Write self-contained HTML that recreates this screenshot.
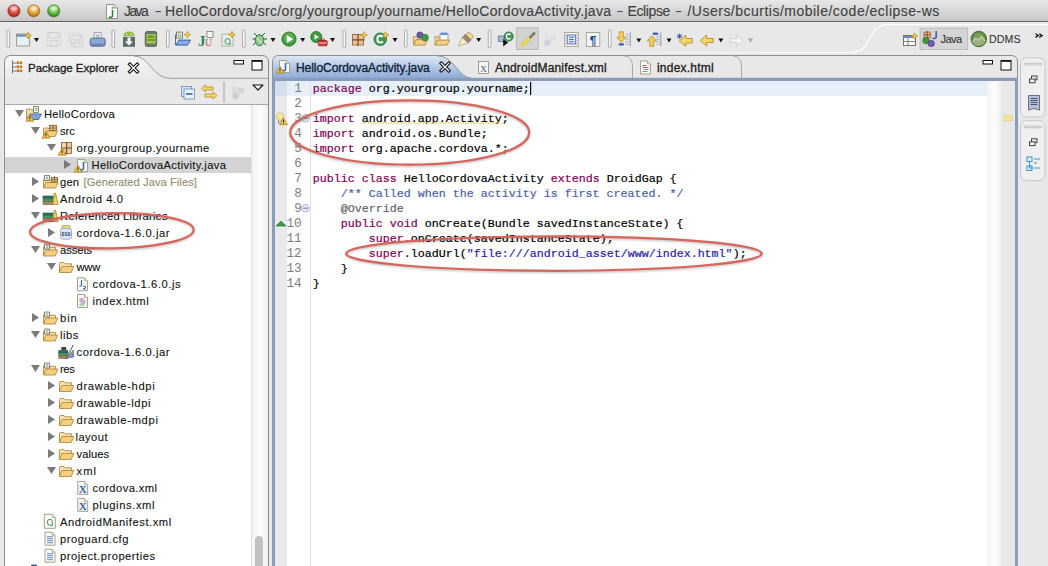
<!DOCTYPE html>
<html><head><meta charset="utf-8"><title>Eclipse</title>
<style>html,body{margin:0;padding:0;background:#e8e8e8;overflow:hidden}svg{display:block}</style>
</head><body><svg width="1048" height="566" viewBox="0 0 1048 566"><defs><linearGradient id="gTitle" x1="0" y1="0" x2="0" y2="1"><stop offset="0" stop-color="#e8e8e8"/><stop offset="1" stop-color="#c6c6c6"/></linearGradient><linearGradient id="gActTab" x1="0" y1="0" x2="0" y2="1"><stop offset="0" stop-color="#dde7f4"/><stop offset="1" stop-color="#8dabd8"/></linearGradient><linearGradient id="gViewTab" x1="0" y1="0" x2="0" y2="1"><stop offset="0" stop-color="#f6f6f6"/><stop offset="1" stop-color="#e9e9e9"/></linearGradient><radialGradient id="gRed" cx="0.5" cy="0.35" r="0.6"><stop offset="0" stop-color="#f7a8a0"/><stop offset="0.6" stop-color="#e0483e"/><stop offset="1" stop-color="#a8231c"/></radialGradient><radialGradient id="gYel" cx="0.5" cy="0.35" r="0.6"><stop offset="0" stop-color="#fbe3a6"/><stop offset="0.6" stop-color="#e5a53a"/><stop offset="1" stop-color="#a86d12"/></radialGradient><radialGradient id="gGrn" cx="0.5" cy="0.35" r="0.6"><stop offset="0" stop-color="#c8eeb0"/><stop offset="0.6" stop-color="#6bbf45"/><stop offset="1" stop-color="#2f7d1a"/></radialGradient><linearGradient id="gScroll" x1="0" y1="0" x2="1" y2="0"><stop offset="0" stop-color="#f2f2f2"/><stop offset="0.5" stop-color="#fdfdfd"/><stop offset="1" stop-color="#f0f0f0"/></linearGradient><pattern id="pHatch" width="2" height="2" patternUnits="userSpaceOnUse"><rect width="2" height="2" fill="#dfe8f4"/><rect width="1" height="1" fill="#c9d6e8"/><rect x="1" y="1" width="1" height="1" fill="#c9d6e8"/></pattern><linearGradient id="gWhiteLine" gradientUnits="userSpaceOnUse" x1="560" y1="0" x2="820" y2="0"><stop offset="0" stop-color="#fff" stop-opacity="0"/><stop offset="1" stop-color="#fff" stop-opacity="1"/></linearGradient><filter id="fShadow" x="-10%" y="-30%" width="120%" height="160%"><feGaussianBlur stdDeviation="1.2"/></filter></defs><rect x="0" y="0" width="1048" height="566" fill="#e8e8e8"/><rect x="0" y="0" width="1048" height="21" fill="url(#gTitle)"/><rect x="0" y="21" width="1048" height="1" fill="#5e5e5e"/><rect x="0" y="22" width="1048" height="1" fill="#efefef"/><circle cx="13.9" cy="10.9" r="6.1" fill="url(#gRed)" stroke="#8c2a22" stroke-opacity="0.75" stroke-width="0.8"/><ellipse cx="13.9" cy="8.2" rx="3.6" ry="2.3" fill="#fff" opacity="0.45"/><circle cx="33.7" cy="10.9" r="6.1" fill="url(#gYel)" stroke="#9a6a1a" stroke-opacity="0.75" stroke-width="0.8"/><ellipse cx="33.7" cy="8.2" rx="3.6" ry="2.3" fill="#fff" opacity="0.45"/><circle cx="53.7" cy="10.9" r="6.1" fill="url(#gGrn)" stroke="#3a7a2a" stroke-opacity="0.75" stroke-width="0.8"/><ellipse cx="53.7" cy="8.2" rx="3.6" ry="2.3" fill="#fff" opacity="0.45"/><path d="M106.5 4.5 H114 L117.5 8 V18.5 H106.5 Z" fill="#fafaf6" stroke="#8a8a80" stroke-width="0.9" stroke-linejoin="round"/><path d="M114 4.5 V8 H117.5" fill="#e0e0d8" stroke="#8a8a80" stroke-width="0.7"/><path d="M112.5 10 V15.8 Q112.5 17.5 110.8 17.5 Q109.6 17.5 109.2 16.6" fill="none" stroke="#2a7a2a" stroke-width="1.5"/><rect x="111.8" y="7.2" width="1.4" height="1.4" fill="#2a7a2a"/><text x="124.0" y="16" font-size="14" fill="#404040" stroke="#404040" stroke-width="0.12" font-family='"Liberation Sans",sans-serif' xml:space="preserve"  textLength="24.8" lengthAdjust="spacing">Java</text><text x="165.0" y="16" font-size="14" fill="#404040" stroke="#404040" stroke-width="0.12" font-family='"Liberation Sans",sans-serif' xml:space="preserve"  textLength="446.0" lengthAdjust="spacing">HelloCordova/src/org/yourgroup/yourname/HelloCordovaActivity.java</text><text x="627.5" y="16" font-size="14" fill="#404040" stroke="#404040" stroke-width="0.12" font-family='"Liberation Sans",sans-serif' xml:space="preserve"  textLength="42.8" lengthAdjust="spacing">Eclipse</text><text x="687.5" y="16" font-size="14" fill="#404040" stroke="#404040" stroke-width="0.12" font-family='"Liberation Sans",sans-serif' xml:space="preserve"  textLength="251.8" lengthAdjust="spacing">/Users/bcurtis/mobile/code/eclipse-ws</text><rect x="155.6" y="11" width="5.400000000000006" height="1.1" fill="#505050"/><rect x="617.3" y="11" width="5.300000000000068" height="1.1" fill="#505050"/><rect x="676" y="11" width="5.399999999999977" height="1.1" fill="#505050"/><path d="M560 52.5 H850 C862 52.5 866 46 870 38 C875 29 878 24.6 888 24.6 H1048" fill="none" stroke="url(#gWhiteLine)" stroke-width="1.2"/><path d="M4.5 566 V62 Q4.5 55.5 11 55.5 H262 Q268.5 55.5 268.5 62 V566" fill="#e8e8e8" stroke="#8e8e8e" stroke-width="1"/><path d="M5 78.5 V63 Q5 56 12 56 H133 C150 56 152 78 170 78 H268 V79 H5 Z" fill="url(#gViewTab)"/><path d="M133 55.8 C150 55.8 152 78.3 170 78.3 H268" fill="none" stroke="#9c9c9c" stroke-width="1"/><rect x="5" y="104" width="263" height="1" fill="#a8a8a8"/><rect x="5" y="105" width="263" height="461" fill="#ffffff"/><rect x="251" y="105" width="17" height="461" fill="url(#gScroll)"/><rect x="251" y="105" width="1" height="461" fill="#e2e2e2"/><rect x="255" y="536" width="8" height="40" rx="4" fill="#c2c2c2"/><text x="28.0" y="72" font-size="11.6" fill="#1a1a1a" stroke="#1a1a1a" stroke-width="0.3" font-family='"Liberation Sans",sans-serif' xml:space="preserve"  textLength="90.6" lengthAdjust="spacing">Package Explorer</text><path d="M272.5 566 V62 Q272.5 55.5 279 55.5 H1011 Q1017.5 55.5 1017.5 62 V566" fill="#e8e8e8" stroke="#8e8e8e" stroke-width="1"/><path d="M273 78 V63 Q273 56 280 56 H437 C455 56 458 78 472 78 Z" fill="url(#gActTab)"/><path d="M437 55.8 C455 55.8 458 78.3 472 78.3 H1017" fill="none" stroke="#9c9c9c" stroke-width="1"/><path d="M624 56 C630 56 632 60 632.5 66 V78" fill="none" stroke="#a8a8a8" stroke-width="1"/><path d="M733 56 C739 56 741 60 741.5 66 V78" fill="none" stroke="#a8a8a8" stroke-width="1"/><rect x="272" y="78" width="746" height="3" fill="#8a9cba"/><rect x="272" y="78" width="3" height="488" fill="#8a9cba"/><rect x="1015" y="78" width="3" height="488" fill="#8a9cba"/><rect x="275" y="81" width="1" height="485" fill="#dde7f5"/><rect x="987" y="81" width="28" height="1" fill="#dde7f5"/><rect x="275" y="81" width="12" height="485" fill="#e9e9e9"/><rect x="275" y="81" width="12" height="15" fill="url(#pHatch)"/><rect x="287" y="81" width="23" height="485" fill="#ffffff"/><rect x="310" y="81" width="1" height="485" fill="#e3e3e3"/><rect x="311" y="81" width="676" height="485" fill="#ffffff"/><rect x="287" y="81" width="700" height="15" fill="#e6effa"/><rect x="310" y="81" width="1" height="15" fill="#d6dfea"/><rect x="987" y="81" width="14" height="485" fill="url(#gScroll)"/><rect x="1001" y="81" width="14" height="485" fill="#e8e8e8"/><rect x="1004" y="115.7" width="8.5" height="5" fill="#f3e39a" stroke="#e5cf6e" stroke-width="0.6"/><text x="296.0" y="71.6" font-size="12" fill="#0d1a33" stroke="#0d1a33" stroke-width="0.3" font-family='"Liberation Sans",sans-serif' xml:space="preserve"  textLength="133.8" lengthAdjust="spacing">HelloCordovaActivity.java</text><text x="495" y="71.6" font-size="12" fill="#1a1a1a" stroke="#1a1a1a" stroke-width="0.3" font-family='"Liberation Sans",sans-serif' xml:space="preserve"  textLength="111.6" lengthAdjust="spacing">AndroidManifest.xml</text><text x="657.0" y="71.6" font-size="12" fill="#1a1a1a" stroke="#1a1a1a" stroke-width="0.3" font-family='"Liberation Sans",sans-serif' xml:space="preserve"  textLength="56.6" lengthAdjust="spacing">index.html</text><rect x="1020.6" y="57.8" width="24.4" height="59.2" rx="6" fill="#efefef" stroke="#c4c4c4" stroke-width="0.9"/><rect x="1020.6" y="120.6" width="24.4" height="60.0" rx="6" fill="#efefef" stroke="#c4c4c4" stroke-width="0.9"/><text x="301.7" y="92.1" font-size="12.6" fill="#7c7c7c" text-anchor="end" font-family='"Liberation Mono",monospace'>1</text><text x="312.80" y="91.8" font-size="11.67" fill="#7f0055" stroke="#7f0055" stroke-width="0.2" font-family='"Liberation Mono",monospace' xml:space="preserve">package</text><text x="361.80" y="91.8" font-size="11.67" fill="#000000" stroke="#000000" stroke-width="0.2" font-family='"Liberation Mono",monospace' xml:space="preserve"> org.yourgroup.yourname;</text><text x="301.7" y="107.1" font-size="12.6" fill="#7c7c7c" text-anchor="end" font-family='"Liberation Mono",monospace'>2</text><text x="301.7" y="122.1" font-size="12.6" fill="#7c7c7c" text-anchor="end" font-family='"Liberation Mono",monospace'>3</text><text x="312.80" y="121.8" font-size="11.67" fill="#7f0055" stroke="#7f0055" stroke-width="0.2" font-family='"Liberation Mono",monospace' xml:space="preserve">import</text><text x="354.80" y="121.8" font-size="11.67" fill="#000000" stroke="#000000" stroke-width="0.2" font-family='"Liberation Mono",monospace' xml:space="preserve"> android.app.Activity;</text><text x="301.7" y="137.10000000000002" font-size="12.6" fill="#7c7c7c" text-anchor="end" font-family='"Liberation Mono",monospace'>4</text><text x="312.80" y="136.8" font-size="11.67" fill="#7f0055" stroke="#7f0055" stroke-width="0.2" font-family='"Liberation Mono",monospace' xml:space="preserve">import</text><text x="354.80" y="136.8" font-size="11.67" fill="#000000" stroke="#000000" stroke-width="0.2" font-family='"Liberation Mono",monospace' xml:space="preserve"> android.os.Bundle;</text><text x="301.7" y="152.10000000000002" font-size="12.6" fill="#7c7c7c" text-anchor="end" font-family='"Liberation Mono",monospace'>5</text><text x="312.80" y="151.8" font-size="11.67" fill="#7f0055" stroke="#7f0055" stroke-width="0.2" font-family='"Liberation Mono",monospace' xml:space="preserve">import</text><text x="354.80" y="151.8" font-size="11.67" fill="#000000" stroke="#000000" stroke-width="0.2" font-family='"Liberation Mono",monospace' xml:space="preserve"> org.apache.cordova.*;</text><text x="301.7" y="167.10000000000002" font-size="12.6" fill="#7c7c7c" text-anchor="end" font-family='"Liberation Mono",monospace'>6</text><text x="301.7" y="182.10000000000002" font-size="12.6" fill="#7c7c7c" text-anchor="end" font-family='"Liberation Mono",monospace'>7</text><text x="312.80" y="181.8" font-size="11.67" fill="#7f0055" stroke="#7f0055" stroke-width="0.2" font-family='"Liberation Mono",monospace' xml:space="preserve">public</text><text x="361.80" y="181.8" font-size="11.67" fill="#7f0055" stroke="#7f0055" stroke-width="0.2" font-family='"Liberation Mono",monospace' xml:space="preserve">class</text><text x="396.80" y="181.8" font-size="11.67" fill="#000000" stroke="#000000" stroke-width="0.2" font-family='"Liberation Mono",monospace' xml:space="preserve"> HelloCordovaActivity </text><text x="550.80" y="181.8" font-size="11.67" fill="#7f0055" stroke="#7f0055" stroke-width="0.2" font-family='"Liberation Mono",monospace' xml:space="preserve">extends</text><text x="599.80" y="181.8" font-size="11.67" fill="#000000" stroke="#000000" stroke-width="0.2" font-family='"Liberation Mono",monospace' xml:space="preserve"> DroidGap {</text><text x="301.7" y="197.10000000000002" font-size="12.6" fill="#7c7c7c" text-anchor="end" font-family='"Liberation Mono",monospace'>8</text><text x="340.80" y="196.8" font-size="11.67" fill="#4a5fa8" stroke="#4a5fa8" stroke-width="0.2" font-family='"Liberation Mono",monospace' xml:space="preserve">/** Called when the activity is first created. */</text><text x="301.7" y="212.10000000000002" font-size="12.6" fill="#7c7c7c" text-anchor="end" font-family='"Liberation Mono",monospace'>9</text><text x="340.80" y="211.8" font-size="11.67" fill="#646464" stroke="#646464" stroke-width="0.2" font-family='"Liberation Mono",monospace' xml:space="preserve">@Override</text><text x="301.7" y="227.10000000000002" font-size="12.6" fill="#7c7c7c" text-anchor="end" font-family='"Liberation Mono",monospace'>10</text><text x="340.80" y="226.8" font-size="11.67" fill="#7f0055" stroke="#7f0055" stroke-width="0.2" font-family='"Liberation Mono",monospace' xml:space="preserve">public</text><text x="389.80" y="226.8" font-size="11.67" fill="#7f0055" stroke="#7f0055" stroke-width="0.2" font-family='"Liberation Mono",monospace' xml:space="preserve">void</text><text x="417.80" y="226.8" font-size="11.67" fill="#000000" stroke="#000000" stroke-width="0.2" font-family='"Liberation Mono",monospace' xml:space="preserve"> onCreate(Bundle savedInstanceState) {</text><text x="301.7" y="242.10000000000002" font-size="12.6" fill="#7c7c7c" text-anchor="end" font-family='"Liberation Mono",monospace'>11</text><text x="368.80" y="241.8" font-size="11.67" fill="#7f0055" stroke="#7f0055" stroke-width="0.2" font-family='"Liberation Mono",monospace' xml:space="preserve">super</text><text x="403.80" y="241.8" font-size="11.67" fill="#000000" stroke="#000000" stroke-width="0.2" font-family='"Liberation Mono",monospace' xml:space="preserve">.onCreate(savedInstanceState);</text><text x="301.7" y="257.1" font-size="12.6" fill="#7c7c7c" text-anchor="end" font-family='"Liberation Mono",monospace'>12</text><text x="368.80" y="256.8" font-size="11.67" fill="#7f0055" stroke="#7f0055" stroke-width="0.2" font-family='"Liberation Mono",monospace' xml:space="preserve">super</text><text x="403.80" y="256.8" font-size="11.67" fill="#000000" stroke="#000000" stroke-width="0.2" font-family='"Liberation Mono",monospace' xml:space="preserve">.loadUrl(</text><text x="466.80" y="256.8" font-size="11.67" fill="#2a1aa6" stroke="#2a1aa6" stroke-width="0.2" font-family='"Liberation Mono",monospace' xml:space="preserve">"file:///android_asset/www/index.html"</text><text x="732.80" y="256.8" font-size="11.67" fill="#000000" stroke="#000000" stroke-width="0.2" font-family='"Liberation Mono",monospace' xml:space="preserve">);</text><text x="301.7" y="272.1" font-size="12.6" fill="#7c7c7c" text-anchor="end" font-family='"Liberation Mono",monospace'>13</text><text x="312.80" y="271.8" font-size="11.67" fill="#000000" stroke="#000000" stroke-width="0.2" font-family='"Liberation Mono",monospace' xml:space="preserve">    }</text><text x="301.7" y="287.1" font-size="12.6" fill="#7c7c7c" text-anchor="end" font-family='"Liberation Mono",monospace'>14</text><text x="312.80" y="286.8" font-size="11.67" fill="#000000" stroke="#000000" stroke-width="0.2" font-family='"Liberation Mono",monospace' xml:space="preserve">}</text><rect x="530" y="82" width="1.2" height="13" fill="#000"/><rect x="5" y="157" width="246" height="16" fill="#d4d4d4"/><path d="M15 110.0 H24 L19.5 117.0 Z" fill="#7b7b7b"/><g transform="translate(26 106)"><path d="M0.5 13 V4 Q0.5 3 1.5 3 H5 L6 4.2 H10 V7" fill="#f5dca0" stroke="#b08a44" stroke-width="0.9"/><path d="M1 13.5 L4 8 H15.5 L12.5 13.5 Z" fill="#7fa6dc" stroke="#3c64a8" stroke-width="0.9" stroke-linejoin="round"/><path d="M7.5 0.5 H12.5 V6.5 H7.5 Z" fill="#f6f6f2" stroke="#6a6a5a" stroke-width="0.8"/><path d="M9 2.5 H11.3 M9 4.3 H11.3" stroke="#5a8a4a" stroke-width="0.7"/></g><g transform="translate(26 114)"><path d="M4 0.3 L8 7.2 H0 Z" fill="#f2c84b" stroke="#a57a1c" stroke-width="0.7" stroke-linejoin="round"/><rect x="3.55" y="2.2" width="0.9" height="2.8" fill="#222"/><rect x="3.55" y="5.6" width="0.9" height="0.9" fill="#222"/></g><text x="44.0" y="118" font-size="11.2" fill="#111" stroke="#111" stroke-width="0.1" font-family='"Liberation Sans",sans-serif' xml:space="preserve"  textLength="70.8" lengthAdjust="spacing">HelloCordova</text><path d="M31 127.0 H40 L35.5 134.0 Z" fill="#7b7b7b"/><g transform="translate(42 124)"><path d="M1.5 12.5 V5 Q1.5 4 2.5 4 H6 L7 5.2 H12 V7" fill="#f5dca0" stroke="#b08a44" stroke-width="0.9"/><path d="M1.5 12.5 L4 7 H15.5 L13 12.5 Z" fill="#f3cf7e" stroke="#b08a44" stroke-width="0.9" stroke-linejoin="round"/><rect x="7.5" y="1.5" width="7" height="5" fill="#e6c08a" stroke="#8a5a2a" stroke-width="0.8"/><path d="M11 0.5 V7 M7 4 H15" stroke="#8a5a2a" stroke-width="0.8"/></g><g transform="translate(42 131)"><path d="M4 0.3 L8 7.2 H0 Z" fill="#f2c84b" stroke="#a57a1c" stroke-width="0.7" stroke-linejoin="round"/><rect x="3.55" y="2.2" width="0.9" height="2.8" fill="#222"/><rect x="3.55" y="5.6" width="0.9" height="0.9" fill="#222"/></g><text x="60.0" y="135" font-size="11.2" fill="#111" stroke="#111" stroke-width="0.1" font-family='"Liberation Sans",sans-serif' xml:space="preserve"  textLength="14.8" lengthAdjust="spacing">src</text><path d="M47 144.0 H56 L51.5 151.0 Z" fill="#7b7b7b"/><g transform="translate(58 142)"><rect x="3.5" y="0.5" width="10" height="11" fill="#e9c9a5" stroke="#9a6a3a" stroke-width="0.9"/><path d="M8.5 0 V12.5 M3 6 H14" stroke="#7a4a20" stroke-width="1.2"/><rect x="4.3" y="1.3" width="3.5" height="4" fill="#f1dcc0"/></g><g transform="translate(58 148)"><path d="M4 0.3 L8 7.2 H0 Z" fill="#f2c84b" stroke="#a57a1c" stroke-width="0.7" stroke-linejoin="round"/><rect x="3.55" y="2.2" width="0.9" height="2.8" fill="#222"/><rect x="3.55" y="5.6" width="0.9" height="0.9" fill="#222"/></g><text x="76.5" y="152" font-size="11.2" fill="#111" stroke="#111" stroke-width="0.1" font-family='"Liberation Sans",sans-serif' xml:space="preserve"  textLength="132.8" lengthAdjust="spacing">org.yourgroup.yourname</text><path d="M64 160.0 V169.0 L71 164.5 Z" fill="#7b7b7b"/><g transform="translate(77 159)"><path d="M0.5 0.5 H7.5 L10.5 3.5 V12.5 H0.5 Z" fill="#fbfbf6" stroke="#9d9680" stroke-width="0.9" stroke-linejoin="round"/><path d="M7.5 0.5 V3.5 H10.5" fill="#e8e4d0" stroke="#9d9680" stroke-width="0.7"/><path d="M6.5 3 V9 Q6.5 10.8 4.6 10.8 Q3.2 10.8 2.8 9.8" fill="none" stroke="#3a6fb8" stroke-width="1.6"/></g><g transform="translate(74 165)"><path d="M4 0.3 L8 7.2 H0 Z" fill="#f2c84b" stroke="#a57a1c" stroke-width="0.7" stroke-linejoin="round"/><rect x="3.55" y="2.2" width="0.9" height="2.8" fill="#222"/><rect x="3.55" y="5.6" width="0.9" height="0.9" fill="#222"/></g><text x="91.5" y="169" font-size="11.2" fill="#111" stroke="#111" stroke-width="0.1" font-family='"Liberation Sans",sans-serif' xml:space="preserve"  textLength="134.4" lengthAdjust="spacing">HelloCordovaActivity.java</text><path d="M32 177.0 V186.0 L39 181.5 Z" fill="#7b7b7b"/><g transform="translate(43 175)"><path d="M0.5 13 V5 Q0.5 4 1.5 4 H5 L6 5.2 H11 V7" fill="#f5dca0" stroke="#b08a44" stroke-width="0.9"/><path d="M0.5 13 L3 7.5 H15 L12.5 13 Z" fill="#f3cf7e" stroke="#b08a44" stroke-width="0.9" stroke-linejoin="round"/><path d="M1.5 0.5 H6.5 V5.5 H1.5 Z" fill="#f4f4f4" stroke="#6a6a5a" stroke-width="0.8"/><path d="M3 2.3 H5.2 M3 3.8 H5.2" stroke="#5a8a4a" stroke-width="0.7"/><rect x="8.5" y="2.5" width="6" height="4.5" fill="#e6c08a" stroke="#8a5a2a" stroke-width="0.8"/><path d="M11.5 1 V7.5 M8 4.7 H15" stroke="#8a5a2a" stroke-width="0.8"/></g><text x="60.0" y="186" font-size="11.2" fill="#111" stroke="#111" stroke-width="0.1" font-family='"Liberation Sans",sans-serif' xml:space="preserve"  textLength="19.0" lengthAdjust="spacing">gen</text><text x="83.5" y="186" font-size="11.2" fill="#938b6c" stroke="#938b6c" stroke-width="0.1" font-family='"Liberation Sans",sans-serif' xml:space="preserve"  textLength="113.4" lengthAdjust="spacing">[Generated Java Files]</text><path d="M32 194.0 V203.0 L39 198.5 Z" fill="#7b7b7b"/><g transform="translate(42.5 192.5)"><rect x="0.5" y="3.5" width="10" height="2.6" fill="#2f6f6a" stroke="#1d4a47" stroke-width="0.6"/><rect x="0.5" y="6.3" width="10" height="2.6" fill="#4f9a63" stroke="#2e6a3e" stroke-width="0.6"/><rect x="0.5" y="9.2" width="10" height="2.8" fill="#a98a62" stroke="#6f5636" stroke-width="0.6"/><path d="M10.5 12 L11.5 1 L13 0.5 L15.5 12 Z" fill="#f0cf5a" stroke="#9f7f2a" stroke-width="0.7" stroke-linejoin="round"/><path d="M12 4 L14 4.5" stroke="#9f7f2a" stroke-width="0.6"/></g><text x="60" y="203" font-size="11.2" fill="#111" stroke="#111" stroke-width="0.1" font-family='"Liberation Sans",sans-serif' xml:space="preserve"  textLength="63.0" lengthAdjust="spacing">Android 4.0</text><path d="M31 212.0 H40 L35.5 219.0 Z" fill="#7b7b7b"/><g transform="translate(42.5 209.5)"><rect x="0.5" y="3.5" width="10" height="2.6" fill="#2f6f6a" stroke="#1d4a47" stroke-width="0.6"/><rect x="0.5" y="6.3" width="10" height="2.6" fill="#4f9a63" stroke="#2e6a3e" stroke-width="0.6"/><rect x="0.5" y="9.2" width="10" height="2.8" fill="#a98a62" stroke="#6f5636" stroke-width="0.6"/><path d="M10.5 12 L11.5 1 L13 0.5 L15.5 12 Z" fill="#f0cf5a" stroke="#9f7f2a" stroke-width="0.7" stroke-linejoin="round"/><path d="M12 4 L14 4.5" stroke="#9f7f2a" stroke-width="0.6"/></g><text x="60.0" y="220" font-size="11.2" fill="#111" stroke="#111" stroke-width="0.1" font-family='"Liberation Sans",sans-serif' xml:space="preserve"  textLength="107.6" lengthAdjust="spacing">Referenced Libraries</text><path d="M48 228.0 V237.0 L55 232.5 Z" fill="#7b7b7b"/><g transform="translate(60 225)"><rect x="2" y="0.5" width="8" height="3" rx="0.8" fill="#f3dc86" stroke="#b59a3a" stroke-width="0.8"/><rect x="0.5" y="3.2" width="11" height="11" rx="2.5" fill="#dce6f2" stroke="#8f9fb8" stroke-width="0.8"/><text x="6" y="11.2" font-size="6.2" text-anchor="middle" font-family="'Liberation Sans',sans-serif" font-weight="bold" fill="#1f3470" textLength="9" lengthAdjust="spacingAndGlyphs">010</text></g><text x="76.5" y="237" font-size="11.2" fill="#111" stroke="#111" stroke-width="0.1" font-family='"Liberation Sans",sans-serif' xml:space="preserve"  textLength="93.0" lengthAdjust="spacing">cordova-1.6.0.jar</text><path d="M31 246.0 H40 L35.5 253.0 Z" fill="#7b7b7b"/><g transform="translate(43 245.5)"><path d="M0.5 10.5 V1.5 Q0.5 0.5 1.5 0.5 H5 L6 1.8 H12.5 V4.5" fill="#f7e2ad" stroke="#b38a42" stroke-width="0.9"/><path d="M0.5 10.5 L3 4.5 H14.8 L12.2 10.5 Z" fill="#f3cf7e" stroke="#b38a42" stroke-width="0.9" stroke-linejoin="round"/></g><g transform="translate(43 243.5)"><path d="M1.5 0.5 H6.5 V5.5 H1.5 Z" fill="#f4f4f4" stroke="#6a6a5a" stroke-width="0.8"/><path d="M3 2.3 H5.2 M3 3.8 H5.2" stroke="#5a8a4a" stroke-width="0.7"/></g><text x="60.0" y="254" font-size="11.2" fill="#111" stroke="#111" stroke-width="0.1" font-family='"Liberation Sans",sans-serif' xml:space="preserve"  textLength="32.2" lengthAdjust="spacing">assets</text><path d="M47 263.0 H56 L51.5 270.0 Z" fill="#7b7b7b"/><g transform="translate(59 262)"><path d="M0.5 10.5 V1.5 Q0.5 0.5 1.5 0.5 H5 L6 1.8 H12.5 V4.5" fill="#f7e2ad" stroke="#b38a42" stroke-width="0.9"/><path d="M0.5 10.5 L3 4.5 H14.8 L12.2 10.5 Z" fill="#f3cf7e" stroke="#b38a42" stroke-width="0.9" stroke-linejoin="round"/></g><text x="76.5" y="271" font-size="11.2" fill="#111" stroke="#111" stroke-width="0.1" font-family='"Liberation Sans",sans-serif' xml:space="preserve"  textLength="23.8" lengthAdjust="spacing">www</text><g transform="translate(77 277.3)"><path d="M0.5 0.5 H7.5 L10.5 3.5 V13.5 H0.5 Z" fill="#fbfbf6" stroke="#9d9680" stroke-width="0.9" stroke-linejoin="round"/><path d="M7.5 0.5 V3.5 H10.5" fill="#e8e4d0" stroke="#9d9680" stroke-width="0.7"/><path d="M4.5 2.8 V7.5 Q4.5 9 3 9 H2.3 M6 9 Q9 9 8.5 10.3 Q8 11.5 6 11.5 Q8.5 11.8 8.5 12.3" fill="none" stroke="#2b5ea8" stroke-width="1.1"/></g><text x="92.5" y="288" font-size="11.2" fill="#111" stroke="#111" stroke-width="0.1" font-family='"Liberation Sans",sans-serif' xml:space="preserve"  textLength="88.2" lengthAdjust="spacing">cordova-1.6.0.js</text><g transform="translate(77 294)"><path d="M0.5 0.5 H7.5 L10.5 3.5 V13.5 H0.5 Z" fill="#fbfbf6" stroke="#9d9680" stroke-width="0.9" stroke-linejoin="round"/><path d="M7.5 0.5 V3.5 H10.5" fill="#e8e4d0" stroke="#9d9680" stroke-width="0.7"/><path d="M2.5 5 H6.5" stroke="#7a5aa8" stroke-width="1"/><path d="M2.5 7 H8.5" stroke="#c85a5a" stroke-width="1"/><path d="M3.5 9 H8.5" stroke="#5a8ac8" stroke-width="1"/><path d="M2.5 11 H7.5" stroke="#5aa87a" stroke-width="1"/></g><text x="92.5" y="305" font-size="11.2" fill="#111" stroke="#111" stroke-width="0.1" font-family='"Liberation Sans",sans-serif' xml:space="preserve"  textLength="56.2" lengthAdjust="spacing">index.html</text><path d="M32 313.0 V322.0 L39 317.5 Z" fill="#7b7b7b"/><g transform="translate(43 313.5)"><path d="M0.5 10.5 V1.5 Q0.5 0.5 1.5 0.5 H5 L6 1.8 H12.5 V4.5" fill="#f7e2ad" stroke="#b38a42" stroke-width="0.9"/><path d="M0.5 10.5 L3 4.5 H14.8 L12.2 10.5 Z" fill="#f3cf7e" stroke="#b38a42" stroke-width="0.9" stroke-linejoin="round"/></g><g transform="translate(43 311.5)"><path d="M1.5 0.5 H6.5 V5.5 H1.5 Z" fill="#f4f4f4" stroke="#6a6a5a" stroke-width="0.8"/><path d="M3 2.3 H5.2 M3 3.8 H5.2" stroke="#5a8a4a" stroke-width="0.7"/></g><text x="60.0" y="322" font-size="11.2" fill="#111" stroke="#111" stroke-width="0.1" font-family='"Liberation Sans",sans-serif' xml:space="preserve"  textLength="16.8" lengthAdjust="spacing">bin</text><path d="M31 331.0 H40 L35.5 338.0 Z" fill="#7b7b7b"/><g transform="translate(43 330.5)"><path d="M0.5 10.5 V1.5 Q0.5 0.5 1.5 0.5 H5 L6 1.8 H12.5 V4.5" fill="#f7e2ad" stroke="#b38a42" stroke-width="0.9"/><path d="M0.5 10.5 L3 4.5 H14.8 L12.2 10.5 Z" fill="#f3cf7e" stroke="#b38a42" stroke-width="0.9" stroke-linejoin="round"/></g><g transform="translate(43 328.5)"><path d="M1.5 0.5 H6.5 V5.5 H1.5 Z" fill="#f4f4f4" stroke="#6a6a5a" stroke-width="0.8"/><path d="M3 2.3 H5.2 M3 3.8 H5.2" stroke="#5a8a4a" stroke-width="0.7"/></g><text x="60.0" y="339" font-size="11.2" fill="#111" stroke="#111" stroke-width="0.1" font-family='"Liberation Sans",sans-serif' xml:space="preserve"  textLength="18.4" lengthAdjust="spacing">libs</text><g transform="translate(58.3 344)"><rect x="0.5" y="6.5" width="9" height="2.5" fill="#2f6f6a" stroke="#1d4a47" stroke-width="0.6"/><rect x="0.5" y="9.2" width="9" height="2.5" fill="#4f9a63" stroke="#2e6a3e" stroke-width="0.6"/><rect x="0.5" y="12" width="9" height="2.5" fill="#a98a62" stroke="#6f5636" stroke-width="0.6"/><path d="M3 3 H8 V6.5 H3 Z" fill="#444" /><path d="M8 14 L15 1" stroke="#555" stroke-width="1"/><path d="M7 14.5 L15 6 L15.5 13 Z" fill="#8a8fb0" stroke="#5a5f80" stroke-width="0.6"/></g><text x="76.5" y="356" font-size="11.2" fill="#111" stroke="#111" stroke-width="0.1" font-family='"Liberation Sans",sans-serif' xml:space="preserve"  textLength="93.0" lengthAdjust="spacing">cordova-1.6.0.jar</text><path d="M31 365.0 H40 L35.5 372.0 Z" fill="#7b7b7b"/><g transform="translate(43 364.5)"><path d="M0.5 10.5 V1.5 Q0.5 0.5 1.5 0.5 H5 L6 1.8 H12.5 V4.5" fill="#f7e2ad" stroke="#b38a42" stroke-width="0.9"/><path d="M0.5 10.5 L3 4.5 H14.8 L12.2 10.5 Z" fill="#f3cf7e" stroke="#b38a42" stroke-width="0.9" stroke-linejoin="round"/></g><g transform="translate(43 362.5)"><path d="M1.5 0.5 H6.5 V5.5 H1.5 Z" fill="#f4f4f4" stroke="#6a6a5a" stroke-width="0.8"/><path d="M3 2.3 H5.2 M3 3.8 H5.2" stroke="#5a8a4a" stroke-width="0.7"/></g><text x="60.0" y="373" font-size="11.2" fill="#111" stroke="#111" stroke-width="0.1" font-family='"Liberation Sans",sans-serif' xml:space="preserve"  textLength="14.8" lengthAdjust="spacing">res</text><path d="M48 381.0 V390.0 L55 385.5 Z" fill="#7b7b7b"/><g transform="translate(59 381)"><path d="M0.5 10.5 V1.5 Q0.5 0.5 1.5 0.5 H5 L6 1.8 H12.5 V4.5" fill="#f7e2ad" stroke="#b38a42" stroke-width="0.9"/><path d="M0.5 10.5 L3 4.5 H14.8 L12.2 10.5 Z" fill="#f3cf7e" stroke="#b38a42" stroke-width="0.9" stroke-linejoin="round"/></g><text x="76.5" y="390" font-size="11.2" fill="#111" stroke="#111" stroke-width="0.1" font-family='"Liberation Sans",sans-serif' xml:space="preserve"  textLength="78.2" lengthAdjust="spacing">drawable-hdpi</text><path d="M48 398.0 V407.0 L55 402.5 Z" fill="#7b7b7b"/><g transform="translate(59 398)"><path d="M0.5 10.5 V1.5 Q0.5 0.5 1.5 0.5 H5 L6 1.8 H12.5 V4.5" fill="#f7e2ad" stroke="#b38a42" stroke-width="0.9"/><path d="M0.5 10.5 L3 4.5 H14.8 L12.2 10.5 Z" fill="#f3cf7e" stroke="#b38a42" stroke-width="0.9" stroke-linejoin="round"/></g><text x="76.5" y="407" font-size="11.2" fill="#111" stroke="#111" stroke-width="0.1" font-family='"Liberation Sans",sans-serif' xml:space="preserve"  textLength="74.0" lengthAdjust="spacing">drawable-ldpi</text><path d="M48 415.0 V424.0 L55 419.5 Z" fill="#7b7b7b"/><g transform="translate(59 415)"><path d="M0.5 10.5 V1.5 Q0.5 0.5 1.5 0.5 H5 L6 1.8 H12.5 V4.5" fill="#f7e2ad" stroke="#b38a42" stroke-width="0.9"/><path d="M0.5 10.5 L3 4.5 H14.8 L12.2 10.5 Z" fill="#f3cf7e" stroke="#b38a42" stroke-width="0.9" stroke-linejoin="round"/></g><text x="76.5" y="424" font-size="11.2" fill="#111" stroke="#111" stroke-width="0.1" font-family='"Liberation Sans",sans-serif' xml:space="preserve"  textLength="81.4" lengthAdjust="spacing">drawable-mdpi</text><path d="M48 432.0 V441.0 L55 436.5 Z" fill="#7b7b7b"/><g transform="translate(59 432)"><path d="M0.5 10.5 V1.5 Q0.5 0.5 1.5 0.5 H5 L6 1.8 H12.5 V4.5" fill="#f7e2ad" stroke="#b38a42" stroke-width="0.9"/><path d="M0.5 10.5 L3 4.5 H14.8 L12.2 10.5 Z" fill="#f3cf7e" stroke="#b38a42" stroke-width="0.9" stroke-linejoin="round"/></g><text x="75.5" y="441" font-size="11.2" fill="#111" stroke="#111" stroke-width="0.1" font-family='"Liberation Sans",sans-serif' xml:space="preserve"  textLength="32.0" lengthAdjust="spacing">layout</text><path d="M48 449.0 V458.0 L55 453.5 Z" fill="#7b7b7b"/><g transform="translate(59 449)"><path d="M0.5 10.5 V1.5 Q0.5 0.5 1.5 0.5 H5 L6 1.8 H12.5 V4.5" fill="#f7e2ad" stroke="#b38a42" stroke-width="0.9"/><path d="M0.5 10.5 L3 4.5 H14.8 L12.2 10.5 Z" fill="#f3cf7e" stroke="#b38a42" stroke-width="0.9" stroke-linejoin="round"/></g><text x="76.5" y="458" font-size="11.2" fill="#111" stroke="#111" stroke-width="0.1" font-family='"Liberation Sans",sans-serif' xml:space="preserve"  textLength="32.6" lengthAdjust="spacing">values</text><path d="M47 467.0 H56 L51.5 474.0 Z" fill="#7b7b7b"/><g transform="translate(59 466)"><path d="M0.5 10.5 V1.5 Q0.5 0.5 1.5 0.5 H5 L6 1.8 H12.5 V4.5" fill="#f7e2ad" stroke="#b38a42" stroke-width="0.9"/><path d="M0.5 10.5 L3 4.5 H14.8 L12.2 10.5 Z" fill="#f3cf7e" stroke="#b38a42" stroke-width="0.9" stroke-linejoin="round"/></g><text x="76.5" y="475" font-size="11.2" fill="#111" stroke="#111" stroke-width="0.1" font-family='"Liberation Sans",sans-serif' xml:space="preserve"  textLength="19.6" lengthAdjust="spacing">xml</text><g transform="translate(77.2 481)"><path d="M0.5 0.5 H7.5 L10.5 3.5 V13.5 H0.5 Z" fill="#fbfbf6" stroke="#9d9680" stroke-width="0.9" stroke-linejoin="round"/><path d="M7.5 0.5 V3.5 H10.5" fill="#e8e4d0" stroke="#9d9680" stroke-width="0.7"/><rect x="1.2" y="3.8" width="8.6" height="9.4" fill="#e2eaf4"/><text x="5.5" y="12.2" font-size="10.5" text-anchor="middle" font-family="'Liberation Serif',serif" fill="#22447a">X</text></g><text x="92.5" y="492" font-size="11.2" fill="#111" stroke="#111" stroke-width="0.1" font-family='"Liberation Sans",sans-serif' xml:space="preserve"  textLength="64.6" lengthAdjust="spacing">cordova.xml</text><g transform="translate(77.2 498)"><path d="M0.5 0.5 H7.5 L10.5 3.5 V13.5 H0.5 Z" fill="#fbfbf6" stroke="#9d9680" stroke-width="0.9" stroke-linejoin="round"/><path d="M7.5 0.5 V3.5 H10.5" fill="#e8e4d0" stroke="#9d9680" stroke-width="0.7"/><rect x="1.2" y="3.8" width="8.6" height="9.4" fill="#e2eaf4"/><text x="5.5" y="12.2" font-size="10.5" text-anchor="middle" font-family="'Liberation Serif',serif" fill="#22447a">X</text></g><text x="92.5" y="509" font-size="11.2" fill="#111" stroke="#111" stroke-width="0.1" font-family='"Liberation Sans",sans-serif' xml:space="preserve"  textLength="62.0" lengthAdjust="spacing">plugins.xml</text><g transform="translate(43.8 513.8)"><path d="M0.5 0.5 H8.5 L11.5 3.5 V14.5 H0.5 Z" fill="#fbfbf6" stroke="#9d9680" stroke-width="0.9" stroke-linejoin="round"/><path d="M8.5 0.5 V3.5 H11.5" fill="#e8e4d0" stroke="#9d9680" stroke-width="0.7"/><path d="M8.5 12 V7.5 Q8.5 5.5 6.2 5.5 Q3.5 5.5 3.5 8.5 Q3.5 11.5 6 11.5 H9" fill="none" stroke="#3f9a5a" stroke-width="1"/></g><text x="60" y="526" font-size="11.2" fill="#111" stroke="#111" stroke-width="0.1" font-family='"Liberation Sans",sans-serif' xml:space="preserve"  textLength="111.2" lengthAdjust="spacing">AndroidManifest.xml</text><g transform="translate(44.5 531.7)"><path d="M0.5 0.5 H7.5 L10.5 3.5 V13.5 H0.5 Z" fill="#fbfbf6" stroke="#9d9680" stroke-width="0.9" stroke-linejoin="round"/><path d="M7.5 0.5 V3.5 H10.5" fill="#e8e4d0" stroke="#9d9680" stroke-width="0.7"/><path d="M2.5 5 H8.5 M2.5 7 H8.5 M2.5 9 H8.5 M2.5 11 H8.5" stroke="#5a7ab8" stroke-width="0.9"/></g><text x="60.0" y="543" font-size="11.2" fill="#111" stroke="#111" stroke-width="0.1" font-family='"Liberation Sans",sans-serif' xml:space="preserve"  textLength="68.4" lengthAdjust="spacing">proguard.cfg</text><g transform="translate(44.5 548.7)"><path d="M0.5 0.5 H7.5 L10.5 3.5 V13.5 H0.5 Z" fill="#fbfbf6" stroke="#9d9680" stroke-width="0.9" stroke-linejoin="round"/><path d="M7.5 0.5 V3.5 H10.5" fill="#e8e4d0" stroke="#9d9680" stroke-width="0.7"/><path d="M2.5 5 H8.5 M2.5 7 H8.5 M2.5 9 H8.5 M2.5 11 H8.5" stroke="#5a7ab8" stroke-width="0.9"/></g><text x="60.0" y="560" font-size="11.2" fill="#111" stroke="#111" stroke-width="0.1" font-family='"Liberation Sans",sans-serif' xml:space="preserve"  textLength="95.0" lengthAdjust="spacing">project.properties</text><rect x="7" y="30" width="2.6" height="17.5" rx="0.6" fill="#fbfbfb" stroke="#9c9c9c" stroke-width="0.8"/><g transform="translate(16 32.5)"><rect x="0.5" y="1.5" width="13" height="12" fill="#e4f0fa" stroke="#a8926a" stroke-width="0.9"/><rect x="0.9" y="1.9" width="12.2" height="2.2" fill="#5f88c4"/></g><g transform="translate(28 35.5)"><path d="M0 -3.3 L0.9899999999999999 -0.9899999999999999 L3.3 0 L0.9899999999999999 0.9899999999999999 L0 3.3 L-0.9899999999999999 0.9899999999999999 L-3.3 0 L-0.9899999999999999 -0.9899999999999999 Z" fill="#f7d24a" stroke="#b48a1a" stroke-width="0.7" stroke-linejoin="round"/></g><path d="M34 38 H39 L36.5 42 Z" fill="#111"/><g transform="translate(46.3 32.2)"><rect x="0.5" y="0.5" width="13.5" height="13.5" rx="1" fill="none" stroke="#d2d2d2" stroke-width="1"/><rect x="3" y="0.5" width="8.5" height="5.5" fill="none" stroke="#d2d2d2" stroke-width="1"/><rect x="3.5" y="8.5" width="7.5" height="5.5" fill="none" stroke="#d2d2d2" stroke-width="1"/></g><g transform="translate(68.2 32.2)"><rect x="0.5" y="0.5" width="11" height="11" rx="1" fill="none" stroke="#dadada" stroke-width="1"/></g><g transform="translate(70.7 34.7) scale(0.86)"><rect x="0.5" y="0.5" width="13.5" height="13.5" rx="1" fill="none" stroke="#d2d2d2" stroke-width="1"/><rect x="3" y="0.5" width="8.5" height="5.5" fill="none" stroke="#d2d2d2" stroke-width="1"/><rect x="3.5" y="8.5" width="7.5" height="5.5" fill="none" stroke="#d2d2d2" stroke-width="1"/></g><g transform="translate(89.7 32.2)"><rect x="4.5" y="0.5" width="7" height="7" fill="#fff" stroke="#8a8a9a" stroke-width="0.8"/><path d="M6 3 H10 M6 5 H10" stroke="#5a6a9a" stroke-width="0.8"/><rect x="0.5" y="6" width="15" height="8" rx="2" fill="#8ea8d4" stroke="#4a5f8f" stroke-width="0.9"/><rect x="1" y="11.5" width="14" height="2.5" fill="#6a84b8"/></g><rect x="112" y="30" width="2.6" height="17.5" rx="0.6" fill="#fbfbfb" stroke="#9c9c9c" stroke-width="0.8"/><g transform="translate(123 31)"><path d="M0.5 5 Q0.5 0.5 6 0.5 Q11.5 0.5 11.5 5 Z" fill="#92bb3e"/><circle cx="3.8" cy="3.3" r="0.7" fill="#fff"/><circle cx="8.2" cy="3.3" r="0.7" fill="#fff"/><rect x="0" y="5.8" width="12" height="10" fill="#5f6b6b"/><path d="M4.5 6.5 V10.5 H2 L6 14.5 L10 10.5 H7.5 V6.5 Z" fill="#fff"/></g><g transform="translate(144.7 31)"><rect x="0.5" y="0.5" width="11.5" height="15" rx="1.8" fill="#6a7a68" stroke="#4a5548" stroke-width="0.7"/><rect x="1.8" y="3" width="9" height="9.5" fill="#a6c655"/><path d="M2.5 7 Q2.5 4 6.3 4 Q10 4 10 7 Z" fill="#6e9a2a"/><rect x="2.5" y="8" width="7.5" height="2" fill="#6e9a2a"/></g><rect x="166.5" y="30" width="2.6" height="17.5" rx="0.6" fill="#fbfbfb" stroke="#9c9c9c" stroke-width="0.8"/><g transform="translate(175 31.6)"><path d="M0.5 13.5 V3 H5" fill="none" stroke="#3d5ea0" stroke-width="0.9"/><path d="M1 13.5 L4 8.5 H15.5 L12.5 13.5 Z" fill="#8aaee6" stroke="#2f4f9a" stroke-width="0.9" stroke-linejoin="round"/><rect x="1.5" y="0.5" width="6" height="6" fill="#f8f8f4" stroke="#6a6a5a" stroke-width="0.8"/><path d="M5.8 5 V3.2 Q5.8 2.2 4.5 2.2 Q3 2.2 3 3.8 Q3 5 4.5 5 H6" fill="none" stroke="#4a8a4a" stroke-width="0.7"/></g><g transform="translate(187.5 34.6)"><path d="M0 -3.3 L0.9899999999999999 -0.9899999999999999 L3.3 0 L0.9899999999999999 0.9899999999999999 L0 3.3 L-0.9899999999999999 0.9899999999999999 L-3.3 0 L-0.9899999999999999 -0.9899999999999999 Z" fill="#f7d24a" stroke="#b48a1a" stroke-width="0.7" stroke-linejoin="round"/></g><g transform="translate(197.5 31)"><rect x="9.5" y="0.5" width="6" height="6" fill="#f8f8f4" stroke="#6a6a5a" stroke-width="0.7"/><text x="0.5" y="15" font-size="15" font-weight="bold" font-family="'Liberation Serif',sans-serif" fill="#2a8a5a">J</text><text x="7.5" y="15" font-size="10" font-family="'Liberation Serif',sans-serif" fill="#d04a5a">U</text></g><g transform="translate(221.5 31.6)"><rect x="0.5" y="2.5" width="11" height="12" fill="#e9efe6" stroke="#a8a48a" stroke-width="0.8"/><path d="M8.5 13 V9 Q8.5 7 6 7 Q3.5 7 3.5 9.8 Q3.5 12.5 6 12.5 H9" fill="none" stroke="#2f9a6a" stroke-width="1"/></g><g transform="translate(232.0 34.6)"><path d="M0 -3.3 L0.9899999999999999 -0.9899999999999999 L3.3 0 L0.9899999999999999 0.9899999999999999 L0 3.3 L-0.9899999999999999 0.9899999999999999 L-3.3 0 L-0.9899999999999999 -0.9899999999999999 Z" fill="#f7d24a" stroke="#b48a1a" stroke-width="0.7" stroke-linejoin="round"/></g><rect x="242.5" y="30" width="2.6" height="17.5" rx="0.6" fill="#fbfbfb" stroke="#9c9c9c" stroke-width="0.8"/><g transform="translate(252 32)"><path d="M2 1 L5 4 M13 1 L10 4 M0.5 7 H4 M15 7 H11 M1 13 L4.5 10 M14 13 L10.5 10 M7.5 4 V2" stroke="#2a5a3a" stroke-width="1"/><ellipse cx="7.5" cy="8.3" rx="4.3" ry="5.5" fill="#8ec88a" stroke="#2e6a3a" stroke-width="0.9"/><path d="M5 6 L9.5 11" stroke="#c8ecc2" stroke-width="1.3"/></g><path d="M270.5 38 H275.5 L273.0 42 Z" fill="#111"/><g transform="translate(281.5 31.6)"><circle cx="7.5" cy="7.5" r="7.1" fill="#3f9a3f" stroke="#236b23" stroke-width="0.8"/><circle cx="7.5" cy="6.3" r="5.2" fill="#6fc25f" opacity="0.6"/><path d="M5.3 3.6 V11.4 L11.6 7.5 Z" fill="#fff"/></g><path d="M300.2 38 H305.2 L302.7 42 Z" fill="#111"/><g transform="translate(310.2 31.2)"><circle cx="6" cy="5.8" r="5.5" fill="#3f9a3f" stroke="#236b23" stroke-width="0.8"/><path d="M4.3 3 V8.6 L8.8 5.8 Z" fill="#fff"/><rect x="8" y="9.3" width="9" height="5.3" rx="1" fill="#d8383a" stroke="#8a1a1a" stroke-width="0.7"/><rect x="11" y="7.8" width="3" height="1.8" fill="none" stroke="#8a1a1a" stroke-width="0.7"/><rect x="8.5" y="11.3" width="8" height="1" fill="#fff" opacity="0.7"/></g><path d="M330 38 H335 L332.5 42 Z" fill="#111"/><rect x="343" y="30" width="2.6" height="17.5" rx="0.6" fill="#fbfbfb" stroke="#9c9c9c" stroke-width="0.8"/><g transform="translate(352 32)"><rect x="0.5" y="2.5" width="11" height="10.5" fill="#e6c49a" stroke="#9a6a3a" stroke-width="0.9"/><path d="M6 2 V14 M0 7.8 H12.5" stroke="#7a4a20" stroke-width="1.2"/></g><g transform="translate(364 35)"><path d="M0 -3.3 L0.9899999999999999 -0.9899999999999999 L3.3 0 L0.9899999999999999 0.9899999999999999 L0 3.3 L-0.9899999999999999 0.9899999999999999 L-3.3 0 L-0.9899999999999999 -0.9899999999999999 Z" fill="#f7d24a" stroke="#b48a1a" stroke-width="0.7" stroke-linejoin="round"/></g><g transform="translate(373.5 32)"><circle cx="6.8" cy="7.2" r="6.3" fill="#3f9a5a" stroke="#1f6a3a" stroke-width="0.8"/><path d="M9.3 5 Q8.5 3.8 7 3.8 Q3.8 3.8 3.8 7.2 Q3.8 10.6 7 10.6 Q8.5 10.6 9.3 9.4" fill="none" stroke="#fff" stroke-width="1.9"/></g><g transform="translate(385.5 35)"><path d="M0 -3.3 L0.9899999999999999 -0.9899999999999999 L3.3 0 L0.9899999999999999 0.9899999999999999 L0 3.3 L-0.9899999999999999 0.9899999999999999 L-3.3 0 L-0.9899999999999999 -0.9899999999999999 Z" fill="#f7d24a" stroke="#b48a1a" stroke-width="0.7" stroke-linejoin="round"/></g><path d="M392.5 38 H397.5 L395.0 42 Z" fill="#111"/><rect x="404.5" y="30" width="2.6" height="17.5" rx="0.6" fill="#fbfbfb" stroke="#9c9c9c" stroke-width="0.8"/><g transform="translate(413 31.6)"><path d="M0.5 13.5 V5 H6 V7" fill="#f3d896" stroke="#a88a44" stroke-width="0.8"/><path d="M0.5 13.5 L3 8 H14.5 L12 13.5 Z" fill="#f4cf80" stroke="#a88a44" stroke-width="0.9" stroke-linejoin="round"/><circle cx="7" cy="3.5" r="3.2" fill="#6a5aa8" stroke="#4a3a88" stroke-width="0.6"/><circle cx="12" cy="6" r="3.4" fill="#3f9a4a" stroke="#2a6a2a" stroke-width="0.6"/></g><g transform="translate(434.5 31.6)"><path d="M0.5 13.5 V5 H4 V7" fill="#f3d896" stroke="#a88a44" stroke-width="0.8"/><rect x="5.5" y="2.5" width="8" height="6.5" fill="#f8f8f8" stroke="#7a7a8a" stroke-width="0.7"/><rect x="6" y="1" width="7" height="2.4" fill="#6a8ac8"/><path d="M0.5 13.5 L3 8.5 H15 L12.5 13.5 Z" fill="#f4cf80" stroke="#a88a44" stroke-width="0.9" stroke-linejoin="round"/></g><g transform="translate(457.3 31.6)"><path d="M8 3 L12 0.5 L16 4.5 L13.5 8.5 Z" fill="#f0d48a" stroke="#a88a4a" stroke-width="0.7"/><path d="M5 6 L8 3 L13.5 8.5 L10.5 11.5 Z" fill="#9a8a7a" stroke="#6a5a4a" stroke-width="0.7"/><path d="M1 14.5 L5 6 L10.5 11.5 Z" fill="#f6f0d0" stroke="#a89a6a" stroke-width="0.7"/></g><path d="M476.2 38 H481.2 L478.7 42 Z" fill="#111"/><rect x="488.3" y="30" width="2.6" height="17.5" rx="0.6" fill="#fbfbfb" stroke="#9c9c9c" stroke-width="0.8"/><g transform="translate(497.7 31)"><rect x="0.5" y="5" width="6" height="5.5" fill="#a8b8d0" stroke="#5a6a8a" stroke-width="0.7"/><path d="M5.5 8 V15.5 L10.5 11.5 Z" fill="#111"/><circle cx="11" cy="5.5" r="4.6" fill="#3f9a5a" stroke="#1f6a3a" stroke-width="0.7"/><path d="M12.8 4 Q12.3 3 11 3 Q8.7 3 8.7 5.5 Q8.7 8 11 8 Q12.3 8 12.8 7" fill="none" stroke="#fff" stroke-width="1.3"/></g><rect x="516.3" y="27.8" width="21.9" height="21.8" fill="#d2d2d2" stroke="#b2b2b2" stroke-width="0.8"/><g transform="translate(519.5 31)"><path d="M9.5 6 L14.5 1 L16 2.5 L11 7.5 Z" fill="#8a8070" stroke="#6a6050" stroke-width="0.6"/><path d="M2 13.5 L9 6 L11 8 L4 15 Z" fill="#f4e24a" stroke="#c8b42a" stroke-width="0.7"/><path d="M0.5 15 L2 13 L4 14.8 Z" fill="#e8d020"/></g><g transform="translate(542.5 33)"><circle cx="4" cy="3.5" r="3.2" fill="#e4e4e4"/><circle cx="10.5" cy="4.5" r="3.2" fill="#e0e0e0"/><circle cx="5" cy="9.8" r="3.4" fill="#d4d0e2"/></g><g transform="translate(564.2 32)"><rect x="0.5" y="0.5" width="13.5" height="14" fill="#fbfbf6" stroke="#a8a088" stroke-width="0.9"/><rect x="3" y="3" width="8.5" height="9" fill="#dfe9f6" stroke="#3a5aa8" stroke-width="0.8"/><path d="M5 5.2 H9.5 M5 7.5 H9.5 M5 9.8 H9.5" stroke="#3a5aa8" stroke-width="0.9"/><path d="M1.8 2 V13 M12.7 2 V13" stroke="#6a8ac8" stroke-width="0.7" stroke-dasharray="1 1"/></g><g transform="translate(585.8 32)"><rect x="0.5" y="0.5" width="13.5" height="14" fill="#eef5fa" stroke="#a8a088" stroke-width="0.9"/><text x="7.2" y="12.5" font-size="12" font-weight="bold" text-anchor="middle" font-family="'Liberation Sans',sans-serif" fill="#2a4a7a">¶</text></g><rect x="608.5" y="30" width="2.6" height="17.5" rx="0.6" fill="#fbfbfb" stroke="#9c9c9c" stroke-width="0.8"/><g transform="translate(616.3 31.3)"><path d="M9 3 H13 M9 5.5 H13 M9 8 H13 M9 10.5 H13 M9 13 H13" stroke="#9aa8c8" stroke-width="0.8"/><path d="M14 1 V15" stroke="#6a7a9a" stroke-width="0.7"/><rect x="2.5" y="12" width="5" height="2.2" fill="#3a5aa8"/><path d="M3 0.5 H7 V6 H9.5 L5 11 L0.5 6 H3 Z" fill="#f6d05a" stroke="#b48a2a" stroke-width="0.8" stroke-linejoin="round"/></g><path d="M636.3 38.5 H641.3 L638.8 42.5 Z" fill="#111"/><g transform="translate(646.8 31.3)"><path d="M9 3 H13 M9 5.5 H13 M9 8 H13 M9 10.5 H13 M9 13 H13" stroke="#9aa8c8" stroke-width="0.8"/><path d="M14 1 V15" stroke="#6a7a9a" stroke-width="0.7"/><rect x="6" y="1.3" width="5" height="2.2" fill="#3a5aa8"/><path d="M3 15 H7 V9.5 H9.5 L5 4.5 L0.5 9.5 H3 Z" fill="#f6d05a" stroke="#b48a2a" stroke-width="0.8" stroke-linejoin="round"/></g><path d="M666.5 38.5 H671.5 L669.0 42.5 Z" fill="#111"/><g transform="translate(676.8 33.5)"><path d="M15.5 5 H9 V1.5 L2.5 7.5 L9 13 V9.5 H15.5 Z" fill="#f6d868" stroke="#b48a2a" stroke-width="0.9" stroke-linejoin="round"/><path d="M0.5 0.5 L5 5 M5 0.5 L0.5 5 M2.75 0 V5.5 M0 2.75 H5.5" stroke="#2a4a8a" stroke-width="0.8"/></g><g transform="translate(699.7 34)"><path d="M13.5 4.5 H7 V1 L0.5 6.5 L7 12 V8.5 H13.5 Z" fill="#f6d868" stroke="#b48a2a" stroke-width="0.9" stroke-linejoin="round"/></g><path d="M718.4 38.5 H723.4 L720.9 42.5 Z" fill="#111"/><g transform="translate(729.8 34)"><path d="M0.5 4.5 H7 V1 L13.5 6.5 L7 12 V8.5 H0.5 Z" fill="#f2f2f2" stroke="#d0d0d0" stroke-width="0.9" stroke-linejoin="round"/></g><path d="M748 38.5 H753 L750.5 42.5 Z" fill="#a8a8a8"/><g transform="translate(903 33)"><rect x="0.5" y="2.5" width="12" height="10" fill="#fbfbfb" stroke="#6a6a5a" stroke-width="0.9"/><rect x="1" y="3" width="11" height="2" fill="#6a8ac8"/><path d="M5 5 V12.5 M0.5 8.5 H12.5" stroke="#6a6a5a" stroke-width="0.8"/></g><g transform="translate(914.5 36)"><path d="M0 -3.2 L0.96 -0.96 L3.2 0 L0.96 0.96 L0 3.2 L-0.96 0.96 L-3.2 0 L-0.96 -0.96 Z" fill="#f7d24a" stroke="#b48a1a" stroke-width="0.7" stroke-linejoin="round"/></g><rect x="920.1" y="28.1" width="47.6" height="21.4" fill="#d5d5d5" stroke="#b4b4b4" stroke-width="0.8"/><g transform="translate(922.7 30.6)"><rect x="1.5" y="1.5" width="6" height="5.5" fill="#e6c49a" stroke="#9a5a2a" stroke-width="0.8"/><path d="M4.5 0.5 V7.5 M1 4.3 H8" stroke="#8a3a1a" stroke-width="0.9"/><path d="M13.5 0.5 V6 Q13.5 8 11.5 8 Q10.5 8 10 7.3" fill="none" stroke="#3a5ab8" stroke-width="1.5"/><circle cx="3.3" cy="10" r="3.3" fill="#3f9a3f" stroke="#236b23" stroke-width="0.6"/><circle cx="8.5" cy="12.8" r="3.2" fill="#7a5ab8" stroke="#4a2a88" stroke-width="0.6"/></g><text x="940.5" y="43" font-size="11.2" fill="#333" stroke="#333" stroke-width="0.1" font-family='"Liberation Sans",sans-serif' xml:space="preserve"  textLength="21.8" lengthAdjust="spacing">Java</text><g transform="translate(970.8 31)"><circle cx="8" cy="8" r="7.8" fill="#5f8a4a" stroke="#3a5a2a" stroke-width="0.8"/><circle cx="8" cy="8" r="6" fill="#7aa05a"/><path d="M2 11 L5 7 L7.5 9.5 L10.5 5.5 L14 9.5 V12 Q11 15 8 15 Q4 15 2 12 Z" fill="#9ab07a"/><path d="M1.5 11 L5 7 L7.5 9.5 L10.5 5.5 L14.5 10" fill="none" stroke="#eef4e0" stroke-width="0.9"/></g><text x="989.0" y="43" font-size="10.6" fill="#333" stroke="#333" stroke-width="0.1" font-family='"Liberation Sans",sans-serif' xml:space="preserve"  textLength="31.6" lengthAdjust="spacing">DDMS</text><path d="M1035.5 33.8 L1038.3 35.6 L1035.5 37.4 M1039.3 33.8 L1042.1 35.6 L1039.3 37.4" fill="none" stroke="#111" stroke-width="1.3"/><path d="M129.8 64.3 L137.2 71.7 M137.2 64.3 L129.8 71.7" stroke="#111" stroke-width="3.4" stroke-linecap="square"/><path d="M129.8 64.3 L137.2 71.7 M137.2 64.3 L129.8 71.7" stroke="#fff" stroke-width="1.3" stroke-linecap="square"/><path d="M441.3 63.3 L448.7 70.7 M448.7 63.3 L441.3 70.7" stroke="#111" stroke-width="3.4" stroke-linecap="square"/><path d="M441.3 63.3 L448.7 70.7 M448.7 63.3 L441.3 70.7" stroke="#fff" stroke-width="1.3" stroke-linecap="square"/><path d="M12.5 60.5 V73.5 M12.5 63 H16 M12.5 67 H16 M12.5 71 H16" fill="none" stroke="#666" stroke-width="0.9"/><rect x="16.5" y="61.5" width="2.6" height="2.6" fill="#c8781a"/><rect x="19.6" y="61.5" width="2.6" height="2.6" fill="#c8781a"/><rect x="16.5" y="65.5" width="2.6" height="2.6" fill="#c8781a"/><rect x="19.6" y="65.5" width="2.6" height="2.6" fill="#c8781a"/><rect x="16.5" y="69.5" width="2.6" height="2.6" fill="#c8781a"/><rect x="19.6" y="69.5" width="2.6" height="2.6" fill="#c8781a"/><rect x="234.0" y="60.5" width="9.5" height="3.5" fill="#fff" stroke="#111" stroke-width="1"/><rect x="252.0" y="60.5" width="10" height="9.5" fill="#fff" stroke="#111" stroke-width="1"/><rect x="252.0" y="60.5" width="10" height="1.3" fill="#111"/><rect x="983.0" y="60.5" width="9.5" height="3.5" fill="#fff" stroke="#111" stroke-width="1"/><rect x="1001.0" y="60.5" width="10" height="9.5" fill="#fff" stroke="#111" stroke-width="1"/><rect x="1001.0" y="60.5" width="10" height="1.3" fill="#111"/><rect x="181.5" y="86.5" width="10" height="10" fill="#d8e4f0" stroke="#6a8ab0" stroke-width="0.8"/><rect x="184" y="89" width="10.5" height="10" fill="#e8f2fa" stroke="#6a8ab0" stroke-width="0.8"/><path d="M186 94 H192.5" stroke="#2a4a7a" stroke-width="1.4"/><path d="M201.5 88.5 L205.5 85 V87 H213 V90 H205.5 V92 Z" fill="#f6d868" stroke="#b48a2a" stroke-width="0.8" stroke-linejoin="round"/><path d="M217 95.5 L213 92 V94 H205 V97 H213 V99 Z" fill="#f6d868" stroke="#b48a2a" stroke-width="0.8" stroke-linejoin="round"/><rect x="223.5" y="81.5" width="1" height="21" fill="#a0a0a0"/><g transform="translate(230.7 86)"><circle cx="4" cy="3.5" r="3.2" fill="#dcdcdc"/><circle cx="10.5" cy="4.5" r="3.2" fill="#d6d6d6"/><circle cx="5" cy="9.8" r="3.4" fill="#cfcfcf"/></g><path d="M253 85 H263 L258 90 Z" fill="#fff" stroke="#111" stroke-width="1.1" stroke-linejoin="round"/><g transform="translate(279 60)"><path d="M0.5 0.5 H7.5 L10.5 3.5 V12.5 H0.5 Z" fill="#fbfbf6" stroke="#9d9680" stroke-width="0.9" stroke-linejoin="round"/><path d="M7.5 0.5 V3.5 H10.5" fill="#e8e4d0" stroke="#9d9680" stroke-width="0.7"/><path d="M6.5 3 V9 Q6.5 10.8 4.6 10.8 Q3.2 10.8 2.8 9.8" fill="none" stroke="#3a6fb8" stroke-width="1.6"/></g><g transform="translate(276 66)"><path d="M4 0.3 L8 7.2 H0 Z" fill="#f2c84b" stroke="#a57a1c" stroke-width="0.7" stroke-linejoin="round"/><rect x="3.55" y="2.2" width="0.9" height="2.8" fill="#222"/><rect x="3.55" y="5.6" width="0.9" height="0.9" fill="#222"/></g><rect x="478.5" y="61.5" width="10" height="12" fill="#f6f6f0" stroke="#8a8a8a" stroke-width="0.8"/><text x="483.5" y="71.5" font-size="9" text-anchor="middle" font-family="'Liberation Serif',serif" fill="#2a4f8a">X</text><g transform="translate(640 60.5)"><path d="M0.5 0.5 H7.5 L10.5 3.5 V13.5 H0.5 Z" fill="#fbfbf6" stroke="#9d9680" stroke-width="0.9" stroke-linejoin="round"/><path d="M7.5 0.5 V3.5 H10.5" fill="#e8e4d0" stroke="#9d9680" stroke-width="0.7"/><path d="M2.5 5 H6.5" stroke="#7a5aa8" stroke-width="1"/><path d="M2.5 7 H8.5" stroke="#c85a5a" stroke-width="1"/><path d="M3.5 9 H8.5" stroke="#5a8ac8" stroke-width="1"/><path d="M2.5 11 H7.5" stroke="#5aa87a" stroke-width="1"/></g><rect x="1024" y="63.3" width="18" height="1.6" rx="0.8" fill="#fafafa" stroke="#9a9a9a" stroke-width="0.6"/><rect x="1031.5" y="76.0" width="5.5" height="3.8" fill="none" stroke="#333" stroke-width="0.9"/><rect x="1029.5" y="79.0" width="5.5" height="3.8" fill="#f4f4f4" stroke="#333" stroke-width="0.9"/><rect x="1024" y="126.1" width="18" height="1.6" rx="0.8" fill="#fafafa" stroke="#9a9a9a" stroke-width="0.6"/><rect x="1031.5" y="138.79999999999998" width="5.5" height="3.8" fill="none" stroke="#333" stroke-width="0.9"/><rect x="1029.5" y="141.79999999999998" width="5.5" height="3.8" fill="#f4f4f4" stroke="#333" stroke-width="0.9"/><path d="M1028.5 95.5 H1039.5 V110 Q1034 107 1028.5 110 Z" fill="#b9bfd2" stroke="#4a5570" stroke-width="0.8"/><path d="M1030.5 98.5 H1037.5 M1030.5 100.5 H1037.5 M1030.5 102.5 H1037.5 M1030.5 104.5 H1037.5" stroke="#2a3a6a" stroke-width="0.8"/><rect x="1027" y="157" width="5" height="4.5" fill="#dff0fa" stroke="#2a8ac8" stroke-width="0.9"/><rect x="1027" y="166" width="5" height="4.5" fill="#dff0fa" stroke="#2a8ac8" stroke-width="0.9"/><path d="M1029.5 161.5 V168 H1033 M1034 159 H1040 M1034 163 H1037 M1034 168 H1040" fill="none" stroke="#2a8ac8" stroke-width="0.9"/><circle cx="280" cy="116.5" r="3.8" fill="#f6e6a0" stroke="#c8b060" stroke-width="0.6"/><path d="M278.5 120 V123 H281.5 V120" fill="none" stroke="#777" stroke-width="0.8"/><g transform="translate(279.5 117.5)"><path d="M4 0.3 L8 7.2 H0 Z" fill="#f2c84b" stroke="#a57a1c" stroke-width="0.7" stroke-linejoin="round"/><rect x="3.55" y="2.2" width="0.9" height="2.8" fill="#222"/><rect x="3.55" y="5.6" width="0.9" height="0.9" fill="#222"/></g><circle cx="305.5" cy="118.3" r="3.8" fill="#e4ecf4" stroke="#9aaac0" stroke-width="0.8"/><path d="M303.3 118.3 H307.7" stroke="#55657a" stroke-width="0.9"/><circle cx="305.5" cy="208.2" r="3.8" fill="#e4ecf4" stroke="#9aaac0" stroke-width="0.8"/><path d="M303.3 208.2 H307.7" stroke="#55657a" stroke-width="0.9"/><path d="M276 226 L281 221 L286 226 Z" fill="#3c9a4a" stroke="#1f6a2a" stroke-width="0.6"/><path d="M362.8 123 H501.2" stroke="#e6c85a" stroke-width="1.3" stroke-dasharray="1.5 1"/><rect x="31" y="564.5" width="6" height="2" rx="1" fill="#3a5a9a"/><ellipse cx="409.7" cy="133.5" rx="119.5" ry="32.2" transform="rotate(0 409.7 132.5)" fill="none" stroke="#000" stroke-opacity="0.25" stroke-width="2.5" filter="url(#fShadow)"/><ellipse cx="409.7" cy="132.5" rx="119.5" ry="32.2" transform="rotate(0 409.7 132.5)" fill="none" stroke="#d8655b" stroke-width="2.2"/><ellipse cx="554" cy="254.6" rx="207.8" ry="17.2" transform="rotate(0 554 253.6)" fill="none" stroke="#000" stroke-opacity="0.25" stroke-width="2.5" filter="url(#fShadow)"/><ellipse cx="554" cy="253.6" rx="207.8" ry="17.2" transform="rotate(0 554 253.6)" fill="none" stroke="#d8655b" stroke-width="2.2"/><ellipse cx="111.9" cy="231.8" rx="81.8" ry="17.6" transform="rotate(-0.8 111.9 230.8)" fill="none" stroke="#000" stroke-opacity="0.25" stroke-width="2.5" filter="url(#fShadow)"/><ellipse cx="111.9" cy="230.8" rx="81.8" ry="17.6" transform="rotate(-0.8 111.9 230.8)" fill="none" stroke="#d8655b" stroke-width="2.2"/></svg></body></html>
